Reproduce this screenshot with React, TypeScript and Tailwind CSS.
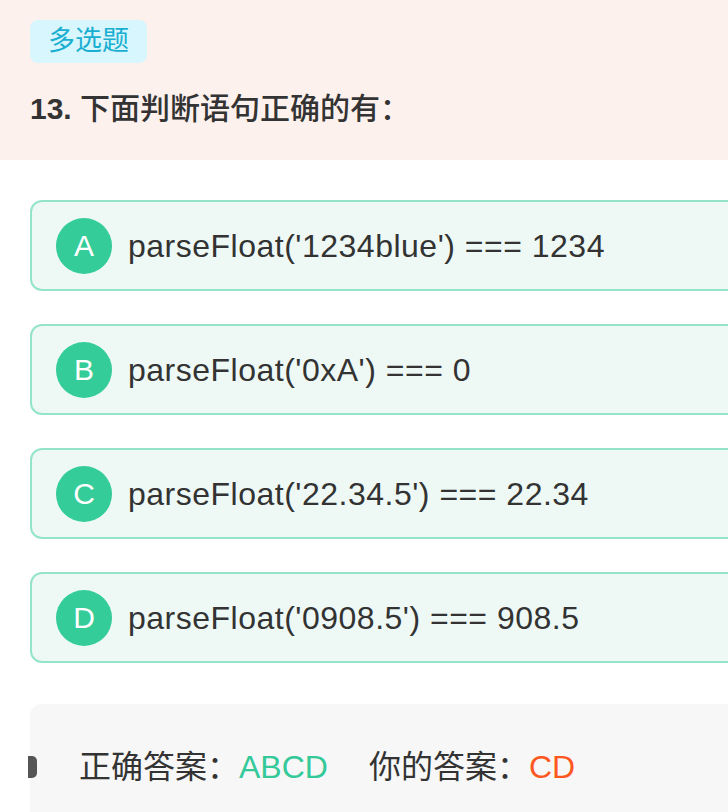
const options = [
  { key: "A", text: "parseFloat('1234blue') === 1234" },
  { key: "B", text: "parseFloat('0xA') === 0" },
  { key: "C", text: "parseFloat('22.34.5') === 22.34" },
  { key: "D", text: "parseFloat('0908.5') === 908.5" },
];

const font = "font-['Liberation_Sans','Noto_Sans_CJK_SC',sans-serif]";

export default function App() {
  return (
    <div className={`w-[728px] h-[812px] overflow-hidden bg-white ${font}`}>
      <div className="bg-[#fdf1ee] px-[30px] pt-5 pb-[33px]">
        <span className="inline-flex h-[43px] items-center rounded-lg bg-[#d8f6fd] px-[18px] text-[27px] text-[#1aafd0]">
          多选题
        </span>
        <h1 className="mt-[28px] text-[30px] leading-[36px] font-medium text-[#333]">
          <span className="font-bold">13. </span>下面判断语句正确的有：
        </h1>
      </div>

      <div className="w-[760px] pl-[30px] pt-10 flex flex-col gap-[33px]">
        {options.map((o) => (
          <div
            key={o.key}
            className="flex h-[91px] items-center rounded-xl border-2 border-[#94e4c9] bg-[#eef9f6] pl-[24px]"
          >
            <span className="flex h-[56px] w-[56px] items-center justify-center rounded-full bg-[#34cc98] text-[30px] text-white">
              {o.key}
            </span>
            <span className="ml-[16px] text-[32px] tracking-[0.5px] text-[#333]">{o.text}</span>
          </div>
        ))}
      </div>

      <div className="ml-[30px] mt-[41px] h-[120px] w-[740px] rounded-tl-xl bg-[#f7f7f7] pt-[45px]">
        <div className="flex h-[36px] items-center text-[32px]">
          <span className="-ml-[2px] h-[22px] w-[9px] rounded-r-[5px] bg-[#555]" />
          <span className="ml-[42px] text-[#333]">正确答案：</span>
          <span className="text-[#35c99a]">ABCD</span>
          <span className="ml-[41px] text-[#333]">你的答案：</span>
          <span className="text-[#fe5722]">CD</span>
        </div>
      </div>
    </div>
  );
}
